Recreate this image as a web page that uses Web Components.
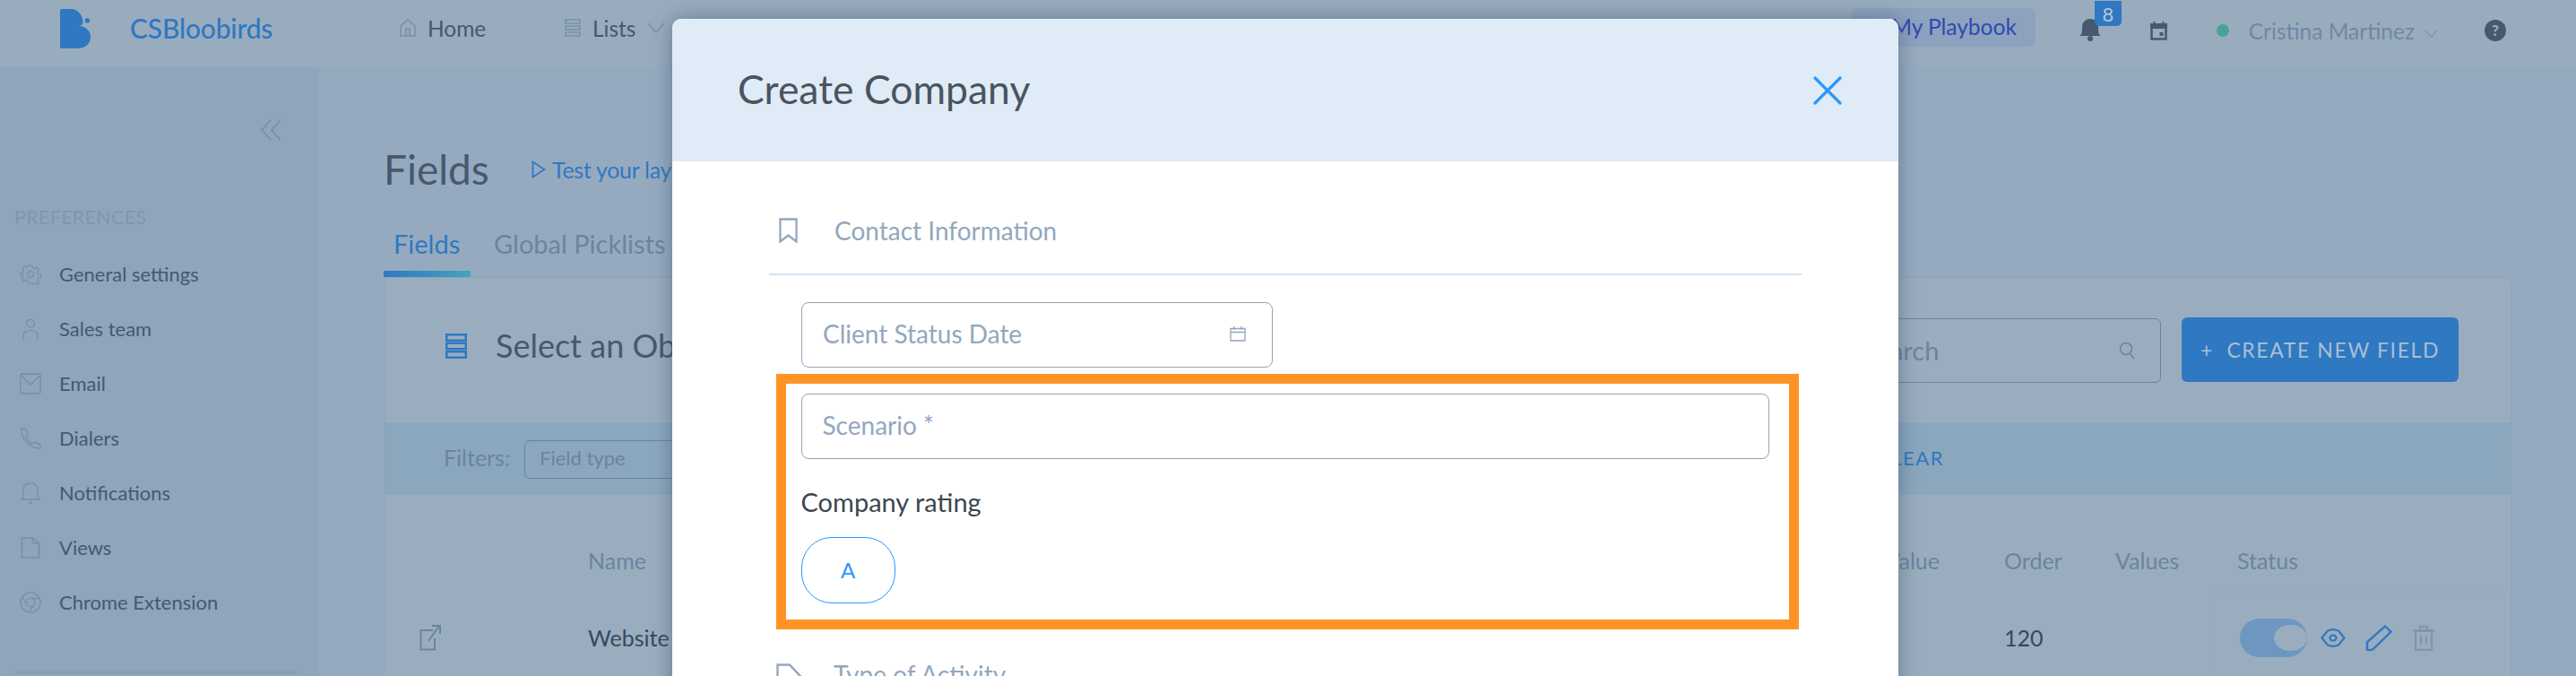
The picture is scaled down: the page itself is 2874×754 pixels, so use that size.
<!DOCTYPE html>
<html><head><meta charset="utf-8"><style>
html,body{margin:0;padding:0;background:#96aabf;overflow:hidden;height:754px;font-family:Lato,"Liberation Sans",sans-serif}
</style></head><body>
<x-app>
  <x-topbar slot="top">
    <span slot="brand">CSBloobirds</span>
    <x-nav-item icon="home" style="width:184px">Home</x-nav-item>
    <x-nav-item icon="list" chevron>Lists</x-nav-item>
    <span slot="playbook">My Playbook</span>
    <span slot="badge">8</span>
    <span slot="user">Cristina Martinez</span>
  </x-topbar>
  <x-sidebar slot="side">
    <x-side-item icon="gear">General settings</x-side-item>
    <x-side-item icon="user">Sales team</x-side-item>
    <x-side-item icon="mail">Email</x-side-item>
    <x-side-item icon="phone">Dialers</x-side-item>
    <x-side-item icon="bell">Notifications</x-side-item>
    <x-side-item icon="file">Views</x-side-item>
    <x-side-item icon="chrome">Chrome Extension</x-side-item>
  </x-sidebar>
  <x-fields-page slot="main"></x-fields-page>
  <x-modal slot="modal">
    <span slot="title">Create Company</span>
    <x-section icon="bookmark">Contact Information</x-section>
    <x-field icon="calendar" style="width:526px;margin:30px 0 7px 36px;padding-bottom:4px">Client Status Date</x-field>
    <x-highlight>
      <x-field style="width:1080px">Scenario *</x-field>
      <x-rating label="Company rating"><x-pill>A</x-pill></x-rating>
    </x-highlight>
    <x-section icon="tag" style="height:auto;margin:38px 0 0 8px;border:0" compact>Type of Activity</x-section>
  </x-modal>
</x-app>
<script>
const ICONS={
 home:['0 0 18 20','<path d="M1 19V8l8-7 8 7v11zM7 19v-8h4v8" fill="none" stroke="currentColor" stroke-width="1.6"/>'],
 list:['0 0 17 20','<path d="M1 1h15v4H1zM1 8h15v4H1zM1 15h15v4H1z" fill="none" stroke="currentColor" stroke-width="1.6"/>'],
 chev:['0 0 20 12','<path d="M1 1l9 10 9-10" fill="none" stroke="currentColor" stroke-width="1.5"/>'],
 dleft:['0 0 25 24','<path d="M12 1L2 12l10 11M23 1L13 12l10 11" fill="none" stroke="currentColor" stroke-width="1.8"/>'],
 gear:['0 0 24 24','<circle cx="12" cy="12" r="3.5" fill="none" stroke="currentColor" stroke-width="1.4"/><path d="M10 1h4l.7 3.2 2.4 1 2.8-1.7 2.6 2.9-1.8 2.7.9 2.4 3.1.6v3.8l-3.1.7-.9 2.3 1.8 2.8-2.6 2.8-2.8-1.8-2.4 1L14 23h-4l-.7-3.2-2.4-1-2.8 1.8-2.6-2.8 1.8-2.8-.9-2.3L0 14V10l3.100-.6.900-2.400L2.200 4.300 4.800 1.400l2.800 1.700 2.400-1z" transform="translate(1.200 1.200) scale(.9)" fill="none" stroke="currentColor" stroke-width="1.400"/>'],
 user:['0 0 24 26','<circle cx="12" cy="6" r="4.500" fill="none" stroke="currentColor" stroke-width="1.500"/><path d="M4 26v-5c0-4 3-6 8-6s8 2 8 6v5" fill="none" stroke="currentColor" stroke-width="1.500"/>'],
 mail:['0 0 24 20','<rect x="1" y="1" width="22" height="18" rx="1.500" fill="none" stroke="currentColor" stroke-width="1.500"/><path d="M1 2l11 9 11-9" fill="none" stroke="currentColor" stroke-width="1.500"/>'],
 phone:['0 0 24 24','<path d="M2 1h4l3 6-2 3c1 3 4 6 7 8l3-2 6 3v4c-9 1-22-9-21-22z" fill="none" stroke="currentColor" stroke-width="1.500" stroke-linejoin="round"/>'],
 bell:['0 0 24 24','<path d="M1 19h22c-2-1-3-3-3-5V9c0-5-3-8-8-8S4 4 4 9v5c0 2-1 4-3 5z" fill="none" stroke="currentColor" stroke-width="1.500"/><circle cx="12" cy="22.500" r="1.500" fill="currentColor"/>'],
 file:['0 0 20 24','<path d="M2 1h10l6 6v16H2zM12 1v6h6" fill="none" stroke="currentColor" stroke-width="1.500"/>'],
 chrome:['0 0 26 26','<circle cx="13" cy="13" r="12" fill="none" stroke="currentColor" stroke-width="1.500"/><circle cx="13" cy="13" r="5" fill="none" stroke="currentColor" stroke-width="1.500"/><path d="M13 8h11M8.600 15.500L3.500 6.500M17.400 15.500L11 25" fill="none" stroke="currentColor" stroke-width="1.500"/>'],
 play:['0 0 16 20','<path d="M1.500 1.500l13 8.500-13 8.500z" fill="none" stroke="currentColor" stroke-width="1.800"/>'],
 object:['0 0 24 28','<path d="M1.250 1.250h21.500v6.500H1.250zM1.250 10.750h21.500v6.500H1.250zM1.250 20.250h21.500v6.500H1.250z" fill="none" stroke="currentColor" stroke-width="2.500"/>'],
 ext:['0 0 24 30','<path d="M15 7H1.500v21.500H17V16M10 19L22 2M14 2h9v9" fill="none" stroke="currentColor" stroke-width="2"/>'],
 bookmark:['0 0 22 28','<path d="M1.500 1.500h19v25l-9.500-7-9.500 7z" fill="none" stroke="currentColor" stroke-width="2.400"/>'],
 calendar:['0 0 18 18','<path d="M1 3.500h16V17H1zM1 7.500h16M5 1v4M13 1v4" fill="none" stroke="currentColor" stroke-width="1.300"/>'],
 tag:['0 0 32 30','<path d="M1.500 1.500H15l15 16-12 11H1.500z" fill="none" stroke="currentColor" stroke-width="2.400"/>'],
 x:['0 0 32 32','<path d="M2 2l28 28M30 2L2 30" fill="none" stroke="currentColor" stroke-width="3.200" stroke-linecap="round"/>'],
 search:['0 0 18 20','<circle cx="8" cy="8" r="6.500" fill="none" stroke="currentColor" stroke-width="1.500"/><path d="M12 13l5 6" stroke="currentColor" stroke-width="1.500"/>'],
 eye:['0 0 28 21','<path d="M1.500 10.500L8 2.500 14 1l6 1.500 6.500 8-6.500 8-6 1.500-6-1.500z" fill="none" stroke="currentColor" stroke-width="2.200" stroke-linejoin="round"/><ellipse cx="14" cy="10.500" rx="3.500" ry="3" fill="none" stroke="currentColor" stroke-width="2.200"/>'],
 pencil:['0 0 30 30','<path d="M2 29V20L22 1.500 28.500 8 8 28.500z" fill="none" stroke="currentColor" stroke-width="2.400"/>'],
 trash:['0 0 26 30','<path d="M4 7h18v22H4zM1 6.500h24M9 6V2h8v4M10 12v11M16 12v11" fill="none" stroke="currentColor" stroke-width="2.400"/>'],
 bellfill:['0 0 24 25','<path d="M0 19c2-1 3-3 3-6V9c0-5 4-9 9-9s9 4 9 9v4c0 3 1 5 3 6z" fill="currentColor"/><circle cx="12" cy="22" r="3" fill="currentColor"/>'],
 calfill:['0 0 19 21','<path d="M1.500 3.500h16v16h-16z" fill="none" stroke="currentColor" stroke-width="2.500"/><path d="M1 3h17v4H1zM4.500 0v4M14.500 0v4" stroke="currentColor" fill="currentColor" stroke-width="2"/><rect x="10.500" y="12" width="4" height="4" fill="currentColor"/>'],
 help:['0 0 24 24','<circle cx="12" cy="12" r="12" fill="currentColor"/><text x="12" y="18" text-anchor="middle" font-family="Lato,sans-serif" font-weight="900" font-size="17" fill="#99acbe">?</text>'],
 logo:['0 0 34 44','<path d="M0 2Q0 0 2 0H12C19 0 25 6 25.500 14C26 17 24 18 22 19C30 20 34 25 34 31C34 39 28 44 20 44H2Q0 44 0 42Z" fill="currentColor"/><circle cx="30.500" cy="13" r="2.700" fill="currentColor"/>']
};
function def(name,html,init){customElements.define(name,class extends HTMLElement{constructor(){super();this.attachShadow({mode:'open'}).innerHTML=html}connectedCallback(){init&&init(this)}})}
const FONT='font-family:Lato,"Liberation Sans",sans-serif;';
customElements.define('x-icon',class extends HTMLElement{connectedCallback(){if(this.shadowRoot)return;const s=this.attachShadow({mode:'open'});const [vb,p]=ICONS[this.getAttribute('name')];const w=this.getAttribute('w'),h=this.getAttribute('h');s.innerHTML=`<style>:host{display:block;flex:none;width:${w}px;height:${h}px}svg{display:block;width:100%;height:100%}</style><svg viewBox="${vb}" preserveAspectRatio="none">${p}</svg>`}});

def('x-app',`<style>:host{display:block;position:relative;width:2874px;height:754px;overflow:hidden;${FONT}}
.row{display:flex;height:679px}</style>
<slot name="top"></slot><div class="row"><slot name="side"></slot><slot name="main"></slot></div><slot name="modal"></slot>`);

def('x-topbar',`<style>:host{display:flex;align-items:center;height:75px;background:#99acbe;box-sizing:border-box;padding:0 78px 0 67px}
.brand{margin-left:44px;width:301px;font-size:30px;font-weight:500;color:#2f78c2;letter-spacing:-.2px}
.nav{display:flex;align-items:center}
.sp{flex:1}
.pb{width:205px;height:43px;margin-bottom:15px;box-sizing:border-box;background:#8ca2bf;border-radius:6px;color:#2e4ab0;font-size:24.5px;display:flex;align-items:center;justify-content:flex-end;padding:0 21px 2px 0}
.bell{position:relative;margin-left:49px;color:#46596f;margin-top:-8px}
.badge{position:absolute;left:17px;top:-20px;width:30px;height:28px;background:#2f78c2;border-radius:0 0 5px 5px;color:#b4c6d8;font-size:22px;display:flex;align-items:center;justify-content:center}
.cal{margin-left:55px;color:#46596f;margin-top:-6px}
.dot{width:14px;height:14px;border-radius:50%;background:#46a392;margin-left:55px;margin-top:-7px}
.user{margin-left:22px;font-size:24.500px;color:#6f88a3;margin-top:-7px}
.chev{color:#7d96b0;margin-left:11px;margin-top:0}
.help{color:#46596f;margin-left:52px;margin-top:-7px}
</style>
<x-icon name="logo" w="34" h="44" style="color:#2f78c2;margin-top:-11px"></x-icon>
<div class="brand" style="margin-top:-13px"><slot name="brand"></slot></div>
<div class="nav" style="margin-top:-13px"><slot></slot></div>
<div class="sp"></div>
<div class="pb"><slot name="playbook"></slot></div>
<div class="bell"><x-icon name="bellfill" w="24" h="25"></x-icon><div class="badge"><slot name="badge"></slot></div></div>
<x-icon class="cal" name="calfill" w="19" h="21"></x-icon>
<div class="dot"></div>
<div class="user"><slot name="user"></slot></div>
<x-icon class="chev" name="chev" w="15" h="9"></x-icon>
<x-icon class="help" name="help" w="24" h="24"></x-icon>`);

customElements.define('x-nav-item',class extends HTMLElement{constructor(){super();const s=this.attachShadow({mode:'open'});const ic=this.getAttribute('icon');const ch=this.hasAttribute('chevron');
s.innerHTML=`<style>:host{display:flex;align-items:center;font-size:24.500px;color:#46596f;flex:none}x-icon{color:#7890ab;margin-right:13px}.c{margin:0 0 0 13px;color:#7890ab}</style><x-icon name="${ic}" w="18" h="20"></x-icon><slot></slot>${ch?'<x-icon class="c" name="chev" w="20" h="12"></x-icon>':''}`}});

def('x-sidebar',`<style>:host{display:flex;flex-direction:column;width:356px;flex:none;background:#8fa5bb;box-sizing:border-box;padding:58px 23px 0 16px}
.col{align-self:flex-end;color:#7890ab;margin-right:18px}
.h{margin-top:72px;font-size:21.500px;color:#7f96af;letter-spacing:.3px;line-height:26px}
.list{margin-top:20px;display:flex;flex-direction:column}
.bar{margin-top:46px;height:4px;background:#8aa0b6}
</style><x-icon class="col" name="dleft" w="25" h="24"></x-icon><div class="h">PREFERENCES</div><div class="list"><slot></slot></div><div class="bar"></div>`);

customElements.define('x-side-item',class extends HTMLElement{constructor(){super();const s=this.attachShadow({mode:'open'});
s.innerHTML=`<style>:host{display:flex;align-items:center;height:61px;font-size:22px;color:#46596f;padding-left:6px}x-icon{color:#7890ab;margin-right:20px}</style><x-icon name="${this.getAttribute('icon')}" w="24" h="24"></x-icon><slot></slot>`}});

def('x-fields-page',`<style>:host{display:block;flex:1;min-width:0;background:#96aabf;box-sizing:border-box;padding:0 72px;position:relative}
.title{display:flex;align-items:center;height:83px;margin-top:72px}
h1{margin:0;font-size:46px;font-weight:400;color:#46596f;width:165px}
.test{display:flex;align-items:center;color:#2f78c2;font-size:25px;letter-spacing:-.3px;white-space:nowrap}
.test x-icon{margin-right:7px}
.tabs{display:flex;height:79px}
.tab{font-size:29px;color:#6b84a0;padding:24px 11px 0;box-sizing:border-box;height:79px;white-space:nowrap}
.tab.on{color:#2f78c2;position:relative;width:97px}
.tab.on:after{content:"";position:absolute;left:0;right:0;bottom:0;height:7px;background:linear-gradient(90deg,#2f78c2,#46a3bc)}
.tab+.tab{margin-left:15px}
</style>
<div class="title"><h1>Fields</h1><div class="test"><x-icon name="play" w="16" h="20" style="color:#2f78c2"></x-icon>Test your layout</div></div>
<div class="tabs"><div class="tab on">Fields</div><div class="tab">Global Picklists</div></div>
<x-card></x-card>`);

def('x-card',`<style>:host{display:block;background:#9aadbe;border:1px solid #8fa3b6;border-bottom:0;border-radius:6px 6px 0 0;height:450px;box-sizing:border-box;${FONT}}
.head{display:flex;align-items:center;height:161px;padding:0 58px 0 68px}
.head h2{margin:0;font-size:36px;font-weight:400;color:#46596f;margin-left:32px;white-space:nowrap;margin-top:-12px}
.head .ob{margin-top:-10px}
.sp{flex:1}
.search{width:354px;height:72px;box-sizing:border-box;border:1.500px solid #6b84a0;border-radius:6px;display:flex;align-items:center;justify-content:space-between;padding:0 28px 0 20px;color:#6b84a0;font-size:29px;margin-top:1px}
.search span{white-space:nowrap;margin-top:-2px}
.btn{margin-left:23px;width:309px;height:72px;background:#2f78c2;border-radius:6px;color:#a9bfd3;font-size:23px;letter-spacing:1.600px;display:flex;align-items:center;justify-content:center;white-space:pre;margin-top:-1px}
.btn i{font-style:normal;margin-right:7px}
.filters{display:flex;align-items:center;height:81px;background:#8aa7bd;padding-left:66px}
.filters b{font-weight:400;font-size:25px;color:#6b84a0;width:90px;padding-bottom:3px}
.ft{height:43px;width:400px;box-sizing:border-box;border:1.500px solid #6b84a0;border-radius:6px;color:#6b84a0;font-size:22px;display:flex;align-items:center;padding:0 0 3px 16px;margin-top:1px}
.clear{margin-left:auto;color:#2f78c2;font-size:22px;letter-spacing:1.500px;margin-right:632px;padding-bottom:2px}
.tr{display:grid;grid-template-columns:227px 1281px 299px 124px 136px 1fr;align-items:center;font-size:25px;color:#6b84a0}
.th{height:146px;padding-bottom:4px}
.val{text-align:right;padding-right:72px}
.rw{color:#354a60;margin-top:-42px}
.rw .tx{padding-bottom:1px}
.x{padding-left:39px}
</style>
<div class="head"><x-icon class="ob" name="object" w="24" h="28" style="color:#2f78c2"></x-icon><h2>Select an Object</h2><div class="sp"></div>
<div class="search"><span>Search</span><x-icon name="search" w="18" h="20"></x-icon></div><div class="btn"><i>+</i> CREATE NEW FIELD</div></div>
<div class="filters"><b>Filters:</b><div class="ft">Field type</div><div class="clear">CLEAR</div></div>
<div class="tr th"><div></div><div>Name</div><div class="val">Default Value</div><div>Order</div><div>Values</div><div>Status</div></div>
<div class="tr rw"><div class="x"><x-icon name="ext" w="24" h="30" style="color:#6b84a0"></x-icon></div><div class="tx">Website</div><div></div><div class="tx">120</div><div></div>
<x-row-actions></x-row-actions></div>`);

def('x-row-actions',`<style>:host{display:flex;align-items:center;height:102px;box-sizing:border-box;margin:0 6px 0 -32px;padding-left:34px;border:1px solid #98abbc}
.t{width:75px;height:43px;border-radius:22px;background:#6d97c0;position:relative;margin-right:15px;flex:none}
.t i{position:absolute;right:0;top:7px;width:37px;height:29px;background:#9aadbe;border-radius:50%}
</style><div class="t"><i></i></div><x-icon name="eye" w="28" h="21" style="color:#2f78c2;margin-right:22px"></x-icon><x-icon name="pencil" w="30" h="29" style="color:#2f78c2;margin-right:22px"></x-icon><x-icon name="trash" w="26" h="29" style="color:#8196ab"></x-icon>`);

def('x-modal',`<style>:host{position:absolute;left:750px;top:21px;width:1368px;height:900px;background:#fff;border-radius:10px 10px 0 0;box-shadow:0 0 22px rgba(60,80,105,.55);${FONT}}
.hd{height:159px;background:#dfebf6;border-radius:10px 10px 0 0;display:flex;align-items:center;justify-content:space-between;padding:0 63px 0 73px;box-sizing:border-box}
.t{font-size:44.500px;font-weight:400;color:#4a545e;margin-top:-4px}
.bd{padding:0 108px;}
</style><div class="hd"><div class="t"><slot name="title"></slot></div><x-icon name="x" w="32" h="32" style="color:#2896ff"></x-icon></div><div class="bd"><slot></slot></div>`);

customElements.define('x-section',class extends HTMLElement{constructor(){super();const s=this.attachShadow({mode:'open'});const ic=this.getAttribute('icon');const isTag=ic=='tag';
s.innerHTML=`<style>:host{display:flex;align-items:center;height:127px;border-bottom:2px solid #d5e3f0;box-sizing:border-box;font-size:28px;color:#93a7bd;padding-left:11px;padding-top:28px}
x-icon{color:#93a7bd;margin-right:41px}
:host([compact]){padding:0;align-items:flex-start;line-height:24px}:host([compact]) x-icon{margin-right:32px}</style><x-icon name="${ic}" w="${isTag?32:21}" h="${isTag?30:28}"></x-icon><slot></slot>`}});

customElements.define('x-field',class extends HTMLElement{constructor(){super();const s=this.attachShadow({mode:'open'});const ic=this.getAttribute('icon');
s.innerHTML=`<style>:host{display:flex;align-items:center;justify-content:space-between;height:73px;box-sizing:border-box;border:1.500px solid #93a3b5;border-radius:8px;padding:0 29px 2px 23px;font-size:28px;color:#93a7bd;background:#fff}x-icon{color:#93a7bd}</style><slot></slot>${ic?`<x-icon name="${ic}" w="18" h="18"></x-icon>`:''}`}});

def('x-highlight',`<style>:host{display:block;margin-left:8px;width:1141px;height:285px;box-sizing:border-box;border:11.500px solid #ff9326;padding:10.500px 16.500px 0}</style><slot></slot>`);

customElements.define('x-rating',class extends HTMLElement{constructor(){super();const s=this.attachShadow({mode:'open'});
s.innerHTML=`<style>:host{display:block}.l{font-size:29px;color:#3c4650;margin-top:32px;line-height:32px;margin-bottom:23px}</style><div class="l">${this.getAttribute('label')}</div><slot></slot>`}});

def('x-pill',`<style>:host{display:flex;align-items:center;justify-content:center;width:105px;height:74px;box-sizing:border-box;border:1.500px solid #2896ff;border-radius:34px;color:#2896ff;font-size:24px;font-weight:400}</style><slot></slot>`);
</script>
</body></html>
